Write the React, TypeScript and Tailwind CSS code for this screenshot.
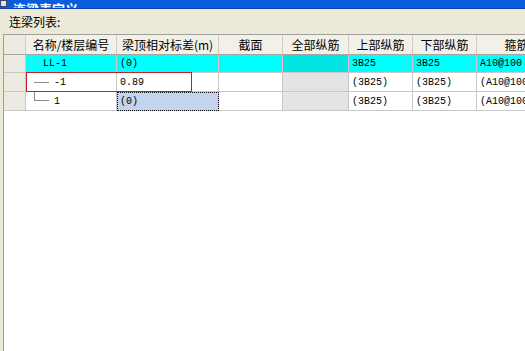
import React from 'react'

const cjk = '"Noto Sans CJK SC", "DejaVu Sans", sans-serif'
const mono = '"Liberation Mono", "Noto Sans CJK SC", monospace'

const cols = [
  { w: 'w-[91px]', title: '名称/楼层编号' },
  { w: 'w-[102px]', title: '梁顶相对标差(m)' },
  { w: 'w-[64px]', title: '截面' },
  { w: 'w-[66px]', title: '全部纵筋' },
  { w: 'w-[64px]', title: '上部纵筋' },
  { w: 'w-[64px]', title: '下部纵筋' },
  { w: 'w-[80px]', title: '箍筋' },
]

const HeaderRow = () => (
  <div className="flex h-[20px] border-b border-[#a7a69a]">
    <div className="w-[22px] shrink-0 bg-[#ecebe2] border-r border-[#d3cfc3]" />
    {cols.map((c, i) => (
      <div
        key={i}
        className={`${c.w} shrink-0 bg-[#f2f1e9] border-r border-[#d8c9c0] flex items-center justify-center text-[12px] text-black whitespace-nowrap`}
        style={{ fontFamily: cjk }}
      >
        {c.title}
      </div>
    ))}
  </div>
)

const Cell = ({ w, cls, children }: { w: string; cls?: string; children?: React.ReactNode }) => (
  <div
    className={`${w} shrink-0 h-full border-r border-b border-[#c8c8c8] flex items-center pl-[3px] text-[10px] text-black overflow-hidden whitespace-nowrap ${cls ?? ''}`}
    style={{ fontFamily: mono }}
  >
    {children}
  </div>
)

const RowHead = () => <div className="w-[22px] shrink-0 h-full bg-[#ecebe2] border-r border-b border-[#c8c8c8]" />

export default function App() {
  return (
    <div className="w-[525px] h-[351px] bg-[#ece9d8] overflow-hidden flex flex-col">
      <div className="h-[9px] bg-[#0a5ddc] overflow-hidden flex items-end shrink-0 border-b border-[#0842b0]">
        <div className="w-[7px] h-[7px] bg-[#d8e4f8] border border-[#446] mb-[1px]" />
        <span className="text-white font-bold text-[13px] leading-[13px] ml-[6px] mb-[-7px]" style={{ fontFamily: cjk }}>
          连梁表定义
        </span>
      </div>
      <div className="h-[25px] pl-[9px] flex items-center text-[12px] text-black shrink-0" style={{ fontFamily: cjk }}>
        连梁列表:
      </div>
      <div className="flex-1 ml-[3px] bg-white border-l border-t border-[#a0a09a] flex flex-col">
        <HeaderRow />
        <div className="flex h-[18px] bg-[#00ffff]">
          <RowHead />
          <Cell w="w-[91px]">
            <span className="w-[8px] h-[8px] border border-[#33eeee] ml-[2px] mr-[4px] inline-block" />
            <span style={{ fontFamily: mono }}>LL-1</span>
          </Cell>
          <Cell w="w-[102px]">(0)</Cell>
          <Cell w="w-[64px]" />
          <Cell w="w-[66px]" cls="bg-[#00e4e4]" />
          <Cell w="w-[64px]">3B25</Cell>
          <Cell w="w-[64px]">3B25</Cell>
          <Cell w="w-[80px]">A10@100</Cell>
        </div>
        <div className="flex h-[19px] relative">
          <RowHead />
          <Cell w="w-[91px]">
            <span className="w-[15px] h-px bg-[#8a8a8a] ml-[5px] mr-[5px]" />
            -1
          </Cell>
          <Cell w="w-[102px]">0.89</Cell>
          <Cell w="w-[64px]" />
          <Cell w="w-[66px]" cls="bg-[#e4e4e4]" />
          <Cell w="w-[64px]">(3B25)</Cell>
          <Cell w="w-[64px]">(3B25)</Cell>
          <Cell w="w-[80px]">(A10@100</Cell>
          <div className="absolute left-[22px] top-[-1px] w-[166px] h-[20px] border border-[#c0202a] pointer-events-none" />
        </div>
        <div className="flex h-[19px]">
          <RowHead />
          <Cell w="w-[91px]">
            <span className="w-[15px] h-[9px] border-l border-b border-[#8a8a8a] ml-[5px] mr-[5px] self-start" />
            1
          </Cell>
          <Cell w="w-[102px]" cls="bg-[#c4d4ee] outline-1 outline-dotted outline-black -outline-offset-1">(0)</Cell>
          <Cell w="w-[64px]" />
          <Cell w="w-[66px]" cls="bg-[#e4e4e4]" />
          <Cell w="w-[64px]">(3B25)</Cell>
          <Cell w="w-[64px]">(3B25)</Cell>
          <Cell w="w-[80px]">(A10@100</Cell>
        </div>
      </div>
    </div>
  )
}
